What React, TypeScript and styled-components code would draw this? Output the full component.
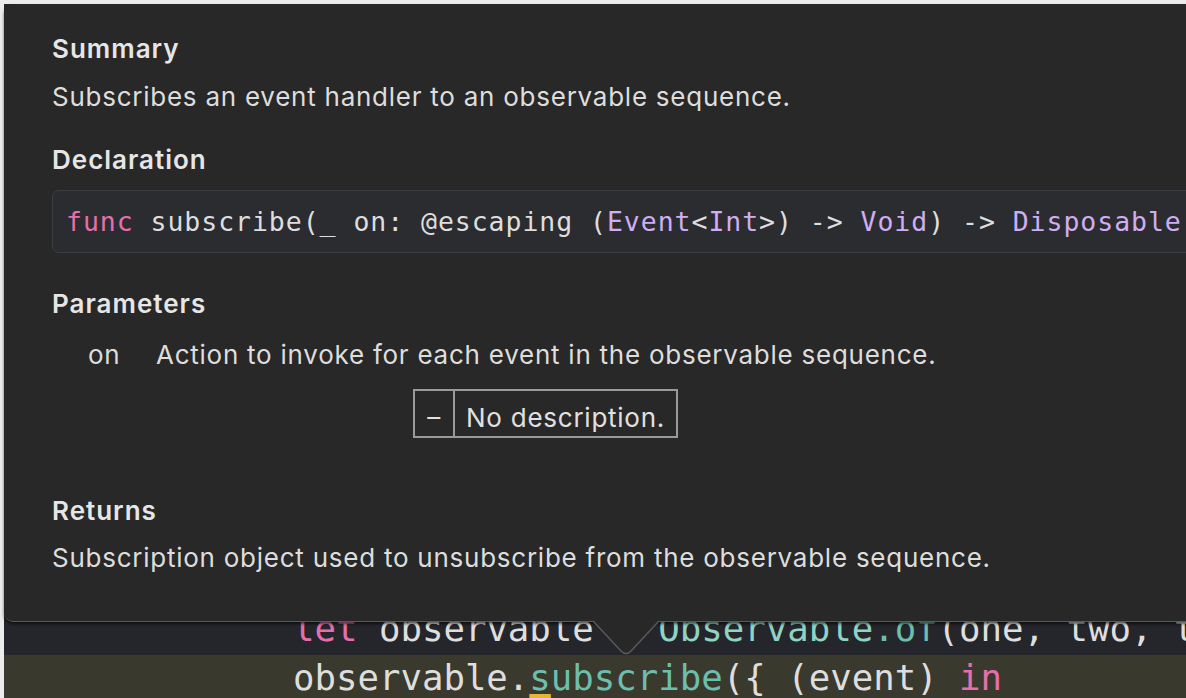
import React from "react";
import styled, { createGlobalStyle } from "styled-components";

const Global = createGlobalStyle`
  html, body { margin: 0; padding: 0; overflow: hidden; background: #ececec; }
  #root { width: 1186px; height: 698px; overflow: hidden; }
`;

const Page = styled.div`
  width: 1186px;
  height: 698px;
  padding: 4px 0 0 4px;
  box-sizing: border-box;
  overflow: hidden;
`;

const Editor = styled.div`
  position: relative;
  height: 696px;
  background: #25262b;
  display: flex;
  flex-direction: column;
  justify-content: flex-end;
  font-family: "DejaVu Sans Mono", "Liberation Mono", monospace;
  font-size: 35.7px;
`;

const CodeLine = styled.div<{ $current?: boolean; $lh?: number }>`
  height: 45px;
  box-sizing: border-box;
  line-height: ${(p) => p.$lh ?? 45}px;
  padding-left: 289px;
  white-space: pre;
  overflow: hidden;
  color: #e2e2e2;
  background: ${(p) => (p.$current ? "#3a392d" : "#25262b")};
`;

type Kind = "kw" | "fn" | "cls" | "type" | "plain";
const tokenColor: Record<Kind, string> = {
  kw: "#e56fae",
  fn: "#6dbfad",
  cls: "#8fd3c3",
  type: "#cfaef2",
  plain: "#dedede",
};

const Tok = styled.span<{ $k: Kind }>`
  color: ${(p) => tokenColor[p.$k]};
`;

const CursorChar = styled.span`
  color: #6dbfad;
  text-decoration: underline;
  text-decoration-color: #e9b530;
  text-decoration-thickness: 4px;
  text-underline-offset: 4px;
`;

const Popover = styled.div`
  position: absolute;
  top: 0;
  left: 0;
  width: 1260px;
  height: 618px;
  box-sizing: border-box;
  background: #282828;
  border-radius: 9px;
  border-bottom: 1px solid #5a5a5a;
  box-shadow: 0 2px 3px rgba(0, 0, 0, 0.6);
  padding: 29px 40px 0 48px;
  display: flex;
  flex-direction: column;
  font-family: "Inter", "Noto Sans", sans-serif;
  color: #e0e0e0;
  z-index: 2;
`;

const Caret = styled.svg`
  position: absolute;
  left: 589px;
  top: 616px;
  z-index: 3;
`;

const Heading = styled.div<{ $mt: number }>`
  margin-top: ${(p) => p.$mt}px;
  font-size: 26px;
  line-height: 32px;
  font-weight: 600;
  letter-spacing: 1px;
  color: #e6e6e6;
`;

const Body = styled.div<{ $mt: number }>`
  margin-top: ${(p) => p.$mt}px;
  font-size: 26px;
  line-height: 32px;
  letter-spacing: 0.75px;
  color: #dddddd;
`;

const DeclBox = styled.div`
  margin-top: 14px;
  height: 63px;
  box-sizing: border-box;
  border: 1px solid #3c3d42;
  border-radius: 7px;
  background: #2b2c30;
  display: flex;
  align-items: center;
  padding-left: 13px;
  font-family: "DejaVu Sans Mono", "Liberation Mono", monospace;
  font-size: 26.5px;
  letter-spacing: 0.95px;
  white-space: pre;
  color: #dcdcdc;
`;

const ParamRow = styled.div`
  margin-top: 19px;
  display: grid;
  grid-template-columns: 68px 1fr;
  padding-left: 36px;
  font-size: 26px;
  line-height: 32px;
  letter-spacing: 0.75px;
  color: #dddddd;
`;

const ParamTable = styled.div`
  margin-top: 18px;
  margin-left: 361px;
  width: fit-content;
  height: 49px;
  box-sizing: border-box;
  border: 2px solid #9a9a9a;
  display: flex;
  font-size: 26px;
  letter-spacing: 0.75px;
  color: #e0e0e0;
`;

const Cell = styled.div<{ $first?: boolean }>`
  display: flex;
  align-items: center;
  justify-content: ${(p) => (p.$first ? "center" : "flex-start")};
  width: ${(p) => (p.$first ? "38px" : "auto")};
  padding: ${(p) => (p.$first ? "6px 0 0 0" : "8px 11px 0 11px")};
  border-right: ${(p) => (p.$first ? "2px solid #9a9a9a" : "none")};
`;

export default function App() {
  return (
    <Page>
      <Global />
      <Editor>
        <Popover>
          <Heading $mt={0}>Summary</Heading>
          <Body $mt={16}>Subscribes an event handler to an observable sequence.</Body>
          <Heading $mt={31}>Declaration</Heading>
          <DeclBox>
            <Tok $k="kw">func</Tok>
            <Tok $k="plain"> subscribe(_ on: @escaping (</Tok>
            <Tok $k="type">Event</Tok>
            <Tok $k="plain">&lt;</Tok>
            <Tok $k="type">Int</Tok>
            <Tok $k="plain">&gt;) -&gt; </Tok>
            <Tok $k="type">Void</Tok>
            <Tok $k="plain">) -&gt; </Tok>
            <Tok $k="type">Disposable</Tok>
          </DeclBox>
          <Heading $mt={35}>Parameters</Heading>
          <ParamRow>
            <span>on</span>
            <span>Action to invoke for each event in the observable sequence.</span>
          </ParamRow>
          <ParamTable>
            <Cell $first>–</Cell>
            <Cell>No description.</Cell>
          </ParamTable>
          <Heading $mt={57}>Returns</Heading>
          <Body $mt={15}>Subscription object used to unsubscribe from the observable sequence.</Body>
        </Popover>
        <Caret width="66" height="36" viewBox="0 0 66 36">
          <path d="M0 0 L66 0 L66 1 L38 31 Q33 36 28 31 L0 1 Z" fill="#282828" />
          <path d="M0 1 L28 31 Q33 36 38 31 L66 1" fill="none" stroke="#5a5a5a" strokeWidth="1.5" />
        </Caret>
        <CodeLine $lh={37}>
          <Tok $k="kw">let</Tok>
          <Tok $k="plain"> observable = </Tok>
          <Tok $k="cls">Observable</Tok>
          <Tok $k="fn">.of</Tok>
          <Tok $k="plain">(one, two, three)</Tok>
        </CodeLine>
        <CodeLine $current>
          <Tok $k="plain">observable.</Tok>
          <CursorChar>s</CursorChar>
          <Tok $k="fn">ubscribe</Tok>
          <Tok $k="plain">({"{"} (event) </Tok>
          <Tok $k="kw">in</Tok>
        </CodeLine>
      </Editor>
    </Page>
  );
}
